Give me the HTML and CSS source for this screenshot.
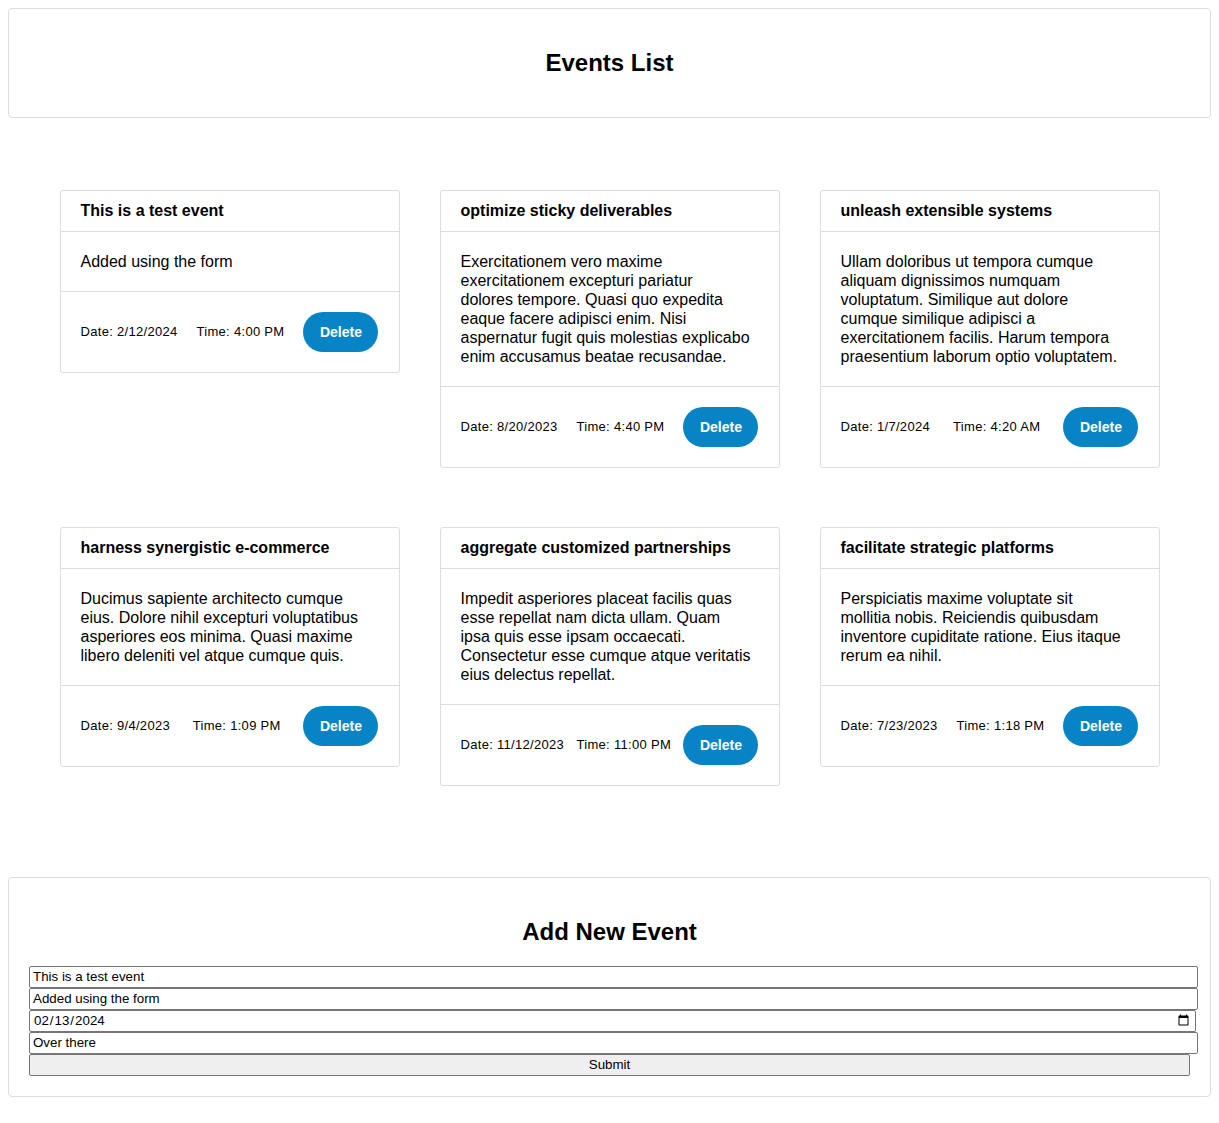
FILE: index.html
```html
<!DOCTYPE html>
<html lang="en">
<head>
<meta charset="utf-8">
<title>Events List</title>
<link rel="stylesheet" href="styles.css">
</head>
<body>
<header class="panel">
  <h2 class="panel-title">Events List</h2>
</header>

<main class="events">
  <article class="card">
    <div class="card-head">This is a test event</div>
    <div class="card-body">Added using the form</div>
    <div class="card-foot">
      <span>Date: 2/12/2024</span>
      <span>Time: 4:00 PM</span>
      <button class="btn-delete">Delete</button>
    </div>
  </article>
  <article class="card">
    <div class="card-head">optimize sticky deliverables</div>
    <div class="card-body">Exercitationem vero maxime<br>exercitationem excepturi pariatur<br>dolores tempore. Quasi quo expedita<br>eaque facere adipisci enim. Nisi<br>aspernatur fugit quis molestias explicabo<br>enim accusamus beatae recusandae.</div>
    <div class="card-foot">
      <span>Date: 8/20/2023</span>
      <span>Time: 4:40 PM</span>
      <button class="btn-delete">Delete</button>
    </div>
  </article>
  <article class="card">
    <div class="card-head">unleash extensible systems</div>
    <div class="card-body">Ullam doloribus ut tempora cumque<br>aliquam dignissimos numquam<br>voluptatum. Similique aut dolore<br>cumque similique adipisci a<br>exercitationem facilis. Harum tempora<br>praesentium laborum optio voluptatem.</div>
    <div class="card-foot">
      <span>Date: 1/7/2024</span>
      <span>Time: 4:20 AM</span>
      <button class="btn-delete">Delete</button>
    </div>
  </article>
  <article class="card">
    <div class="card-head">harness synergistic e-commerce</div>
    <div class="card-body">Ducimus sapiente architecto cumque<br>eius. Dolore nihil excepturi voluptatibus<br>asperiores eos minima. Quasi maxime<br>libero deleniti vel atque cumque quis.</div>
    <div class="card-foot">
      <span>Date: 9/4/2023</span>
      <span>Time: 1:09 PM</span>
      <button class="btn-delete">Delete</button>
    </div>
  </article>
  <article class="card">
    <div class="card-head">aggregate customized partnerships</div>
    <div class="card-body">Impedit asperiores placeat facilis quas<br>esse repellat nam dicta ullam. Quam<br>ipsa quis esse ipsam occaecati.<br>Consectetur esse cumque atque veritatis<br>eius delectus repellat.</div>
    <div class="card-foot">
      <span>Date: 11/12/2023</span>
      <span>Time: 11:00 PM</span>
      <button class="btn-delete">Delete</button>
    </div>
  </article>
  <article class="card">
    <div class="card-head">facilitate strategic platforms</div>
    <div class="card-body">Perspiciatis maxime voluptate sit<br>mollitia nobis. Reiciendis quibusdam<br>inventore cupiditate ratione. Eius itaque<br>rerum ea nihil.</div>
    <div class="card-foot">
      <span>Date: 7/23/2023</span>
      <span>Time: 1:18 PM</span>
      <button class="btn-delete">Delete</button>
    </div>
  </article>
</main>

<section class="panel">
  <h2 class="panel-title">Add New Event</h2>
  <form class="event-form">
    <input class="field" type="text" value="This is a test event">
    <input class="field" type="text" value="Added using the form">
    <input class="field field-date" type="date" value="2024-02-13">
    <input class="field" type="text" value="Over there">
    <button class="btn-submit" type="button">Submit</button>
  </form>
</section>
</body>
</html>
```

FILE: styles.css
```css
body {
  margin: 8px;
  font-family: "Liberation Sans", Arial, sans-serif;
  color: #000;
  background: #fff;
}

.panel {
  border: 1px solid #ddd;
  border-radius: 4px;
  padding: 20px;
}

.panel-title {
  font-size: 24px;
  font-weight: bold;
  text-align: center;
  margin: 19.92px 0;
  line-height: 28px;
}

.events {
  max-width: 1100px;
  margin: 72px auto 91px;
  display: grid;
  grid-template-columns: repeat(3, 1fr);
  column-gap: 40px;
  row-gap: 59px;
  align-items: start;
}

.card {
  border: 1px solid #ddd;
  border-radius: 3px;
  background: #fff;
}

.card-head {
  padding: 10px 20px;
  font-size: 16px;
  font-weight: bold;
  line-height: 20px;
  height: 20px;
  border-bottom: 1px solid #ddd;
}

.card-body {
  padding: 20px;
  font-size: 16px;
  line-height: 19px;
  white-space: nowrap;
  border-bottom: 1px solid #ddd;
}

.card-foot {
  padding: 20px;
  display: flex;
  align-items: center;
  justify-content: space-between;
  font-size: 13px;
  letter-spacing: 0.3px;
}

.btn-delete {
  height: 40px;
  padding: 0 16.5px;
  border: none;
  border-radius: 20px;
  background: #0784c6;
  color: #fff;
  font-family: "Liberation Sans", Arial, sans-serif;
  font-weight: bold;
  font-size: 14px;
  letter-spacing: 0;
}

.event-form {
  display: block;
}

.field {
  display: block;
  box-sizing: border-box;
  width: calc(100% + 8px);
  height: 22px;
  margin: 0;
  padding: 0 3px;
  border: 1px solid #767676;
  border-radius: 2px;
  font-family: "Liberation Sans", Arial, sans-serif;
  font-size: 13.333px;
  background: #fff;
  color: #000;
}

.field-date {
  width: calc(100% + 6px);
}

.btn-submit {
  display: block;
  box-sizing: border-box;
  width: 100%;
  height: 22px;
  margin: 0;
  padding: 0;
  border: 1px solid #767676;
  border-radius: 2px;
  background: #efefef;
  font-family: "Liberation Sans", Arial, sans-serif;
  font-size: 13.333px;
  color: #000;
}
```
